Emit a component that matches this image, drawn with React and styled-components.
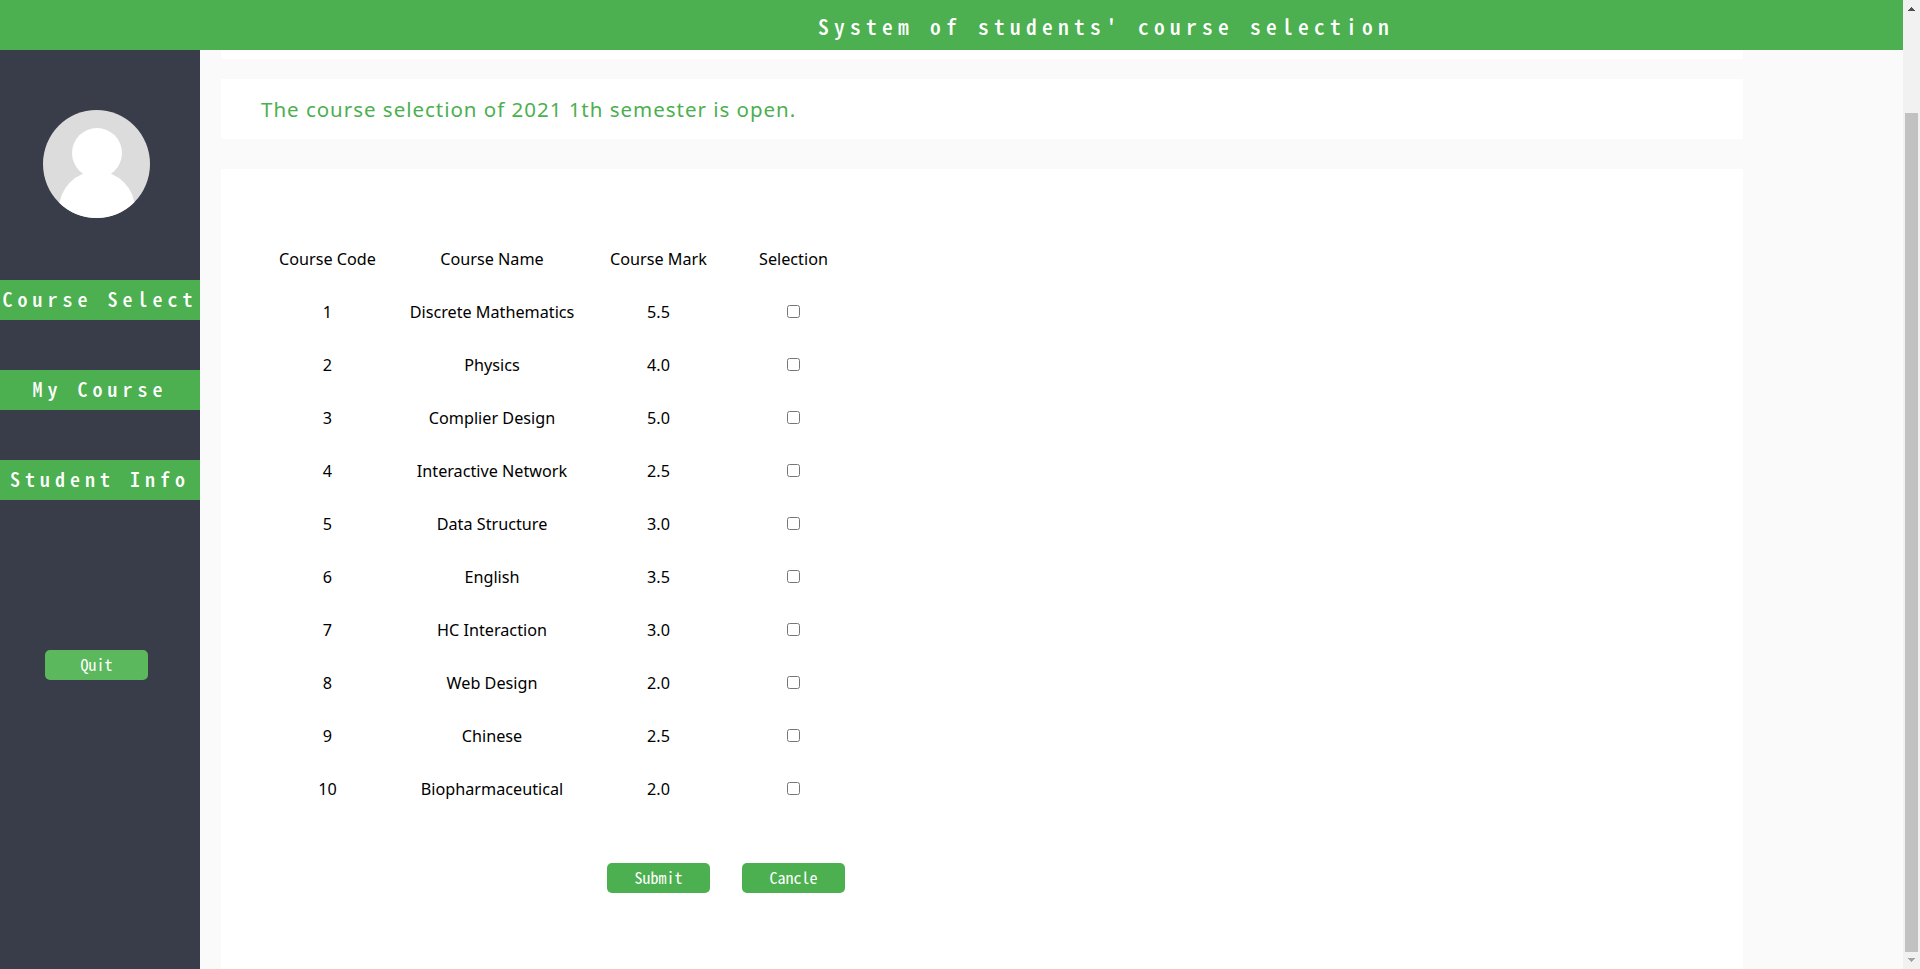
import React from "react";
import styled, { createGlobalStyle } from "styled-components";

const GlobalStyle = createGlobalStyle`
  * { box-sizing: border-box; }
  html, body { margin: 0; padding: 0; overflow: hidden; }
  body { background: #fafafa; color: #000; font: 16px/1 "Noto Sans", "Open Sans", sans-serif; }
`;

const mono = `
  font-family: "Noto Sans CJK SC", sans-serif;
  font-feature-settings: "hwid" 1;
  font-weight: 500;
  color: #fff;
  white-space: pre;
`;

const Window = styled.div`
  display: flex;
  width: 1920px;
  height: 969px;
  overflow: hidden;
`;

const Page = styled.div`
  display: flex;
  flex-direction: column;
  width: 1903px;
`;

const Header = styled.header`
  ${mono}
  flex: none;
  height: 50px;
  padding-left: 818px;
  background: #4caf50;
  font-size: 21.5px;
  line-height: 52px;
  letter-spacing: 5.25px;
`;

const Body = styled.div`
  display: flex;
  flex: 1;
  min-height: 0;
`;

const Sidebar = styled.aside`
  display: flex;
  flex-direction: column;
  flex: none;
  width: 200px;
  padding-top: 60px;
  background: #393d49;
`;

const Avatar = styled.svg`
  display: block;
  width: 107px;
  height: 108px;
  margin: 0 0 62px 43px;
`;

const Nav = styled.nav`
  display: flex;
  flex-direction: column;
  gap: 50px;
  margin-bottom: 150px;
`;

const NavItem = styled.a`
  ${mono}
  height: 40px;
  background: #4caf50;
  font-size: 20px;
  line-height: 37px;
  letter-spacing: 5px;
  text-align: center;
`;

const Button = styled.button`
  ${mono}
  width: 103px;
  height: 30px;
  padding: 0 0 2px;
  border: 0;
  border-radius: 5px;
  background: ${(p) => (p.$light ? "#5cb85c" : "#4caf50")};
  font-size: 16px;
  font-weight: 400;
  line-height: 28px;
`;

const QuitArea = styled.div`
  padding-left: 45px;
`;

const Content = styled.main`
  display: flex;
  flex-direction: column;
  width: 1522px;
  margin-left: 21px;
`;

const TopCard = styled.div`
  flex: none;
  height: 9px;
  margin-bottom: 20px;
  background: #fff;
`;

const Notice = styled.div`
  flex: none;
  height: 60px;
  margin-bottom: 30px;
  padding-left: 40px;
  background: #fff;
  color: #4caf50;
  font-size: 20.5px;
  line-height: 60px;
  letter-spacing: 0.98px;
  white-space: nowrap;
`;

const Card = styled.section`
  flex: 1;
  padding: 64px 0 0 40px;
  background: #fff;
`;

const Row = styled.div`
  display: grid;
  grid-template-columns: 133px 196px 137px 133px;
  height: 53px;
  align-items: center;
  justify-items: center;
  white-space: nowrap;
`;

const Cell = styled.span`
  padding-bottom: 1px;
  font-size: 16.2px;
  line-height: 18px;
`;

const Actions = styled(Row)`
  height: 30px;
  margin-top: 47px;
`;

const Checkbox = styled.input`
  width: 13px;
  height: 13px;
  margin: 0 0 2px;
`;

const Scrollbar = styled.div`
  display: flex;
  flex-direction: column;
  align-items: center;
  width: 17px;
  background: #f1f1f1;
`;

const Arrow = styled.svg`
  display: block;
  width: 17px;
  height: 17px;
  fill: ${(p) => p.$color};
`;

const Thumb = styled.div`
  width: 13px;
  height: 839px;
  margin-top: 96px;
  background: #c1c1c1;
`;

const courses = [
  ["Discrete Mathematics", "5.5"],
  ["Physics", "4.0"],
  ["Complier Design", "5.0"],
  ["Interactive Network", "2.5"],
  ["Data Structure", "3.0"],
  ["English", "3.5"],
  ["HC Interaction", "3.0"],
  ["Web Design", "2.0"],
  ["Chinese", "2.5"],
  ["Biopharmaceutical", "2.0"],
];

export default function App() {
  return (
    <Window>
      <GlobalStyle />
      <Page>
        <Header>System of students' course selection</Header>
        <Body>
          <Sidebar>
            <Avatar viewBox="0 0 107 108">
              <clipPath id="round">
                <ellipse cx="53.5" cy="54" rx="53.5" ry="54" />
              </clipPath>
              <g clipPath="url(#round)">
                <rect width="107" height="108" fill="#dcdcdc" />
                <circle cx="54" cy="43" r="25" fill="#fff" />
                <ellipse cx="54" cy="99" rx="38" ry="38" fill="#fff" />
              </g>
            </Avatar>
            <Nav>
              <NavItem>Course Select</NavItem>
              <NavItem>My Course</NavItem>
              <NavItem>Student Info</NavItem>
            </Nav>
            <QuitArea>
              <Button $light>Quit</Button>
            </QuitArea>
          </Sidebar>
          <Content>
            <TopCard />
            <Notice>The course selection of 2021 1th semester is open.</Notice>
            <Card>
              <Row>
                <Cell>Course Code</Cell>
                <Cell>Course Name</Cell>
                <Cell>Course Mark</Cell>
                <Cell>Selection</Cell>
              </Row>
              {courses.map(([name, mark], i) => (
                <Row key={name}>
                  <Cell>{i + 1}</Cell>
                  <Cell>{name}</Cell>
                  <Cell>{mark}</Cell>
                  <Checkbox type="checkbox" />
                </Row>
              ))}
              <Actions>
                <span />
                <span />
                <Button>Submit</Button>
                <Button>Cancle</Button>
              </Actions>
            </Card>
          </Content>
        </Body>
      </Page>
      <Scrollbar>
        <Arrow $color="#505050" viewBox="0 0 17 17" shapeRendering="crispEdges">
          <path d="M8 7h1v1h1v1h1v1h1v1H5v-1h1V9h1V8h1z" />
        </Arrow>
        <Thumb />
        <Arrow $color="#a3a3a3" viewBox="0 0 17 17" shapeRendering="crispEdges">
          <path d="M5 6h7v1h-1v1h-1v1H9v1H8V9H7V8H6V7H5z" />
        </Arrow>
      </Scrollbar>
    </Window>
  );
}
